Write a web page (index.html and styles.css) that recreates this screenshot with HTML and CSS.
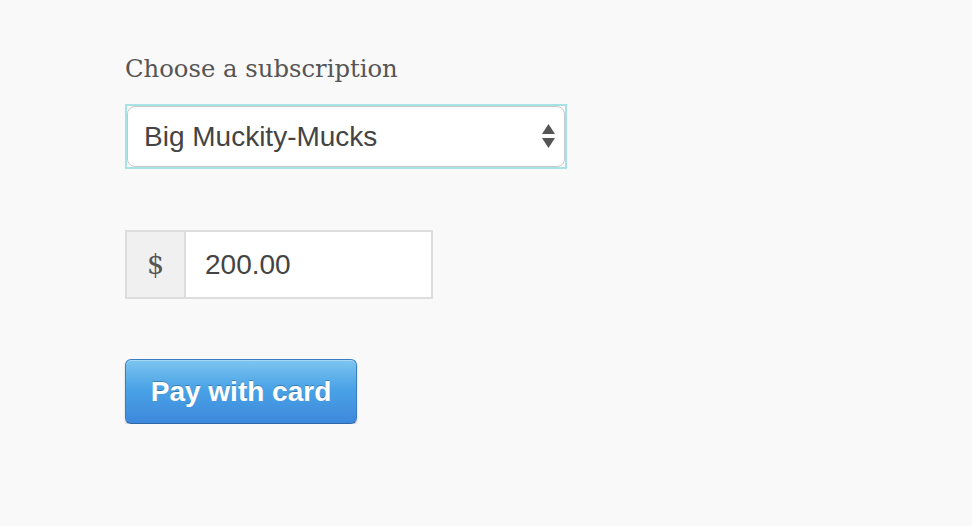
FILE: index.html
```html
<!DOCTYPE html>
<html lang="en">
<head>
    <meta charset="UTF-8">
    <link rel="stylesheet" href="styles.css">
</head>
<body>
    <form class="pay">
        <label class="label" for="plan">Choose a subscription</label>
        <div class="select-wrap">
            <select id="plan" class="select">
                <option>Big Muckity-Mucks</option>
                <option>Small Fry</option>
            </select>
            <svg class="arrows" width="13" height="24" viewBox="0 0 13 24">
                <path d="M6.5 0 L13 10 L0 10 Z" fill="#555"/>
                <path d="M0 14 L13 14 L6.5 24 Z" fill="#555"/>
            </svg>
        </div>
        <div class="amount">
            <span class="addon">$</span>
            <input class="money" type="text" value="200.00">
        </div>
        <button class="btn" type="button">Pay with card</button>
    </form>
</body>
</html>
```

FILE: styles.css
```css
body{
    margin: 0;
    background: #f9f9f9;
}
.pay{
    display: flex;
    flex-direction: column;
    align-items: flex-start;
    padding: 50px 0 0 125px;
}
.label{
    font-family: "DejaVu Serif", serif;
    font-size: 24.3px;
    color: #555;
    line-height: 38px;
    margin-bottom: 16px;
}
.select-wrap{
    position: relative;
    width: 438px;
    height: 61px;
    border: 2px solid #a9e2e5;
}
.select{
    appearance: none;
    -webkit-appearance: none;
    width: 100%;
    height: 100%;
    box-sizing: border-box;
    border: 1px solid #c8c8c8;
    border-radius: 8px;
    background: #fff;
    padding: 0 0 0 16px;
    font-family: "Liberation Sans", Arial, sans-serif;
    font-size: 28px;
    color: #444;
    outline: none;
}
.arrows{
    position: absolute;
    right: 10px;
    top: 18px;
}
.amount{
    display: flex;
    margin-top: 61px;
    border: 2px solid #ddd;
    height: 65px;
    width: 304px;
}
.addon{
    display: flex;
    align-items: center;
    justify-content: center;
    width: 57px;
    background: #f0f0f0;
    border-right: 2px solid #ddd;
    font-family: "DejaVu Serif", serif;
    font-size: 27px;
    color: #555;
}
.money{
    flex: 1;
    min-width: 0;
    border: 0;
    outline: none;
    background: #fff;
    padding: 0 0 0 19px;
    font-family: "Liberation Sans", Arial, sans-serif;
    font-size: 28px;
    color: #444;
}
.btn{
    margin-top: 60px;
    width: 232px;
    height: 65px;
    border: 1px solid #3a7dc5;
    border-bottom-color: #2f68a8;
    border-radius: 6px;
    background: linear-gradient(#7dc5f0, #4aa3e6 45%, #3d88dc);
    box-shadow: inset 0 1px 0 rgba(255,255,255,0.35), 0 2px 2px rgba(0,0,0,0.2);
    font-family: "Liberation Sans", Arial, sans-serif;
    font-weight: bold;
    font-size: 28px;
    color: #fff;
    text-shadow: 0 -1px 0 rgba(0,0,0,0.25);
    padding: 0;
}
```
